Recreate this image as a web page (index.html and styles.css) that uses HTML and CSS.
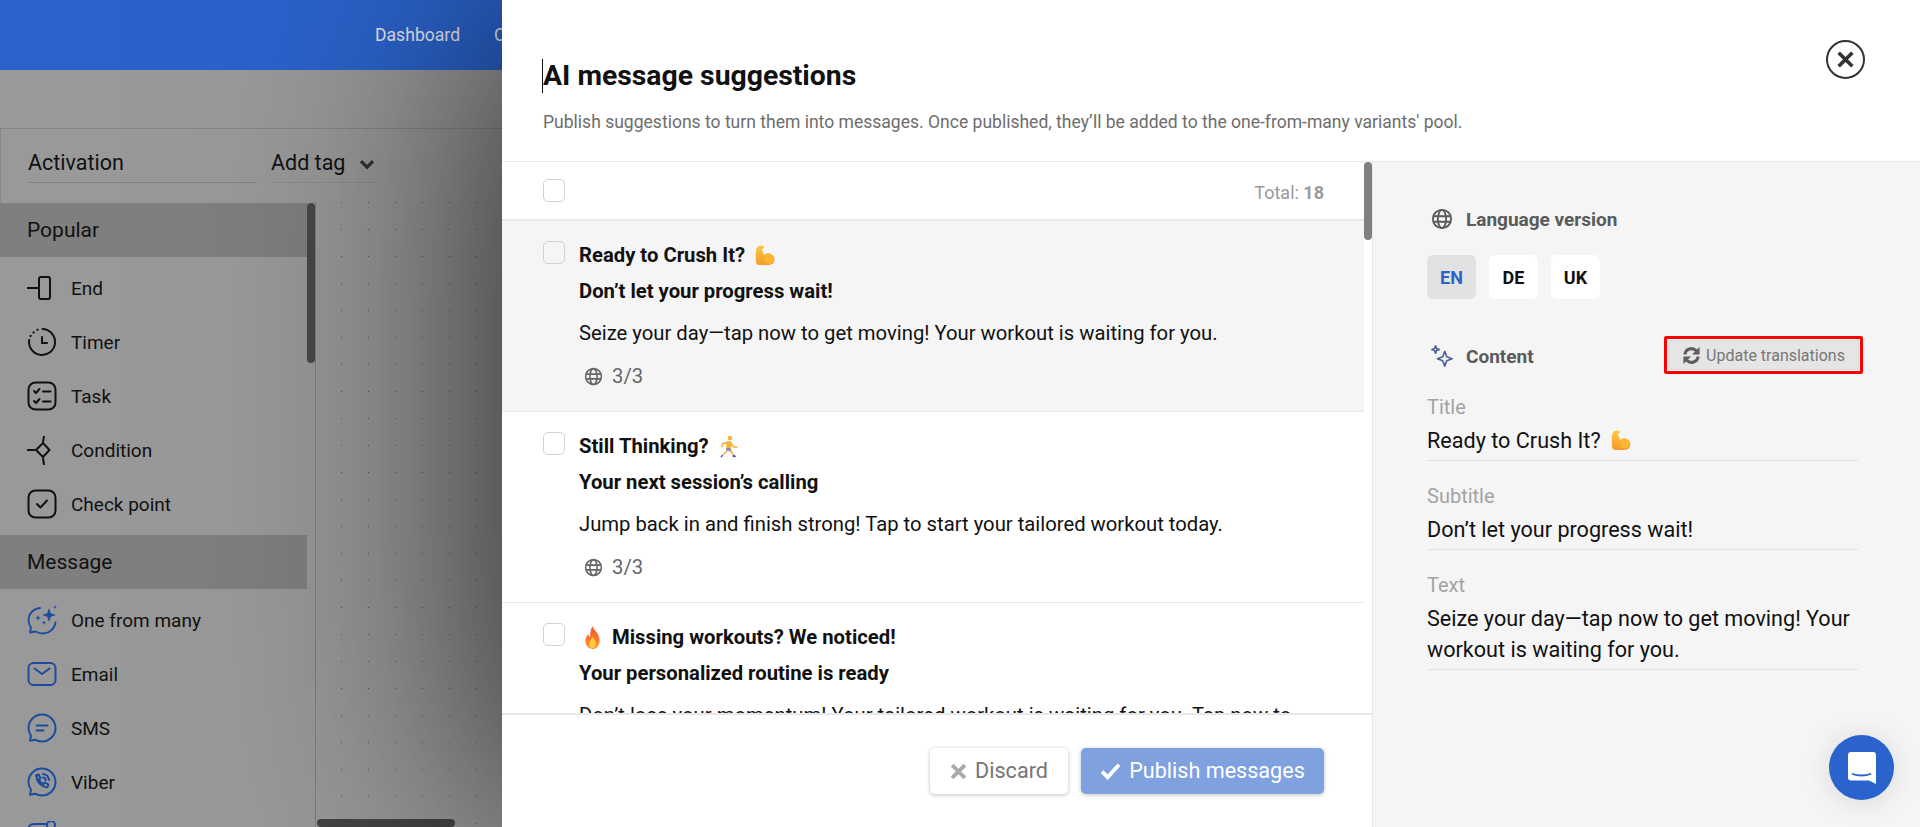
FILE: index.html
```html
<!DOCTYPE html>
<html lang="en">
<head>
<meta charset="utf-8">
<title>AI message suggestions</title>
<link rel="stylesheet" href="styles.css">
</head>
<body>
<svg class="defs" width="0" height="0" aria-hidden="true">
  <defs>
    <linearGradient id="mg" x1="0" y1="0" x2="0" y2="1"><stop offset="0" stop-color="#ffc83d"/><stop offset="1" stop-color="#f59a2c"/></linearGradient>
    <linearGradient id="fg" x1="0" y1="0" x2="0" y2="1"><stop offset="0" stop-color="#f4502a"/><stop offset="1" stop-color="#ff9a2e"/></linearGradient>
    <symbol id="muscle" viewBox="0 0 24 24"><path fill="url(#mg)" d="M5 2.500c2-1.200 5-1.400 6.200-.2 1 1-.2 2.600-2 2.700.6 2.500 1.400 5 2.600 6.600 1.500-1.600 3.600-2.300 5.700-1.800 3.200.8 5 3.400 4.800 6.600-.2 3.400-3 5.600-6.800 5.600H7.500c-2.500 0-4.500-1.300-4.500-4.300 0-5.300-.8-11.500 2-15.200z"/><circle cx="16.500" cy="15.500" r="5" fill="#fdb52f"/></symbol>
    <symbol id="runner" viewBox="0 0 24 24"><circle cx="13.500" cy="3.200" r="2.400" fill="#f7b23b"/><path fill="#f7b23b" d="M10 6.500h4.500l3 5 4 .5-.3 1.500-4.700-.5-1.500-2-1 3H9.500z"/><path fill="#f7b23b" d="M10.500 7L5.500 8 4 12.500l1.500.5 1.300-3.300 3.700-.7z"/><path fill="#8d8aa0" d="M9.500 13.500h4.500l1 2.500-2 1.500-1.500-1.500-2 1z"/><path fill="#f7b23b" d="M13.500 17l1.800-1.200L18 21l-1.500.5zM9.500 16.500l2 .5-5 4.500-1.200-1z"/><path fill="#5b4bc4" d="M5 20.500l1.500 1.200-2 1.800-1-.5zM16.300 21l1.800-.5 1.900 2-.5.5-3 .2z"/></symbol>
    <symbol id="fire" viewBox="0 0 24 24"><path fill="url(#fg)" d="M12 0c.8 4.500 7.500 7.500 7.500 15 0 5-3.400 9-7.500 9s-7.500-3.800-7.500-8.500c0-3.200 1.700-5.200 3-7 .3 1.500 1 2.400 2 3C9.500 7.500 10 3.500 12 0z"/><path fill="#ffc83d" d="M12 11c.6 2.500 3.500 4 3.500 7.500 0 2.500-1.600 4.500-3.500 4.500s-3.500-2-3.500-4.300c0-3 2.800-4.500 3.500-7.700z"/></symbol>
    <symbol id="globe" viewBox="0 0 24 24"><g fill="none" stroke="currentColor" stroke-width="2"><circle cx="12" cy="12" r="10"/><ellipse cx="12" cy="12" rx="4.500" ry="10"/><path d="M2.500 9h19M2.500 15h19"/></g></symbol>
  </defs>
</svg>

<div class="app">
  <header class="topbar">
    <nav class="nav"><span>Dashboard</span><span>Campaigns</span></nav>
  </header>
  <div class="subbar"></div>
  <div class="toolbar">
    <div class="field-name">Activation</div>
    <div class="field-tag">Add tag
      <svg class="chev" viewBox="0 0 14 10"><path d="M1.500 2l5.500 5.500L12.500 2" fill="none" stroke="#333" stroke-width="3"/></svg>
    </div>
  </div>
  <div class="workspace">
    <aside class="side">
      <div class="side-list">
        <div class="band">Popular</div>
        <ul class="items">
          <li><svg class="ic" viewBox="0 0 30 30"><g fill="none" stroke="#111" stroke-width="2"><path d="M0 15h12"/><rect x="12" y="4" width="11" height="22" rx="2"/></g></svg>End</li>
          <li><svg class="ic" viewBox="0 0 30 30"><g fill="none" stroke="#111" stroke-width="2" stroke-linecap="round"><path d="M15.500 2A13 13 0 1 1 2.200 13"/><path d="M3.500 9l.1-.1M6.500 5.500l.1-.1M10.500 2.800l.1-.1" stroke-width="2.200"/><path d="M15 10v6h5"/></g></svg>Timer</li>
          <li><svg class="ic" viewBox="0 0 30 30"><g fill="none" stroke="#111" stroke-width="2" stroke-linecap="round" stroke-linejoin="round"><rect x="1.500" y="1.500" width="27" height="27" rx="7"/><path d="M7 10l2 2 3.500-4M7 20l2 2 3.500-4M16 10.500h7.500M16 20.500h7.500"/></g></svg>Task</li>
          <li><svg class="ic" viewBox="0 0 30 30"><g fill="none" stroke="#111" stroke-width="2"><path d="M16 8l6.500 7-6.500 7-7-7z"/><path d="M0 15h8M17 1l-1 6M16 23l1 7"/></g></svg>Condition</li>
          <li><svg class="ic" viewBox="0 0 30 30"><g fill="none" stroke="#111" stroke-width="2" stroke-linecap="round" stroke-linejoin="round"><rect x="1.500" y="1.500" width="27" height="27" rx="7"/><path d="M10 15l3.500 3.500 6.500-7"/></g></svg>Check point</li>
        </ul>
        <div class="band">Message</div>
        <ul class="items blue">
          <li><svg class="ic" viewBox="0 0 30 30"><g fill="none" stroke="#1d4c9e" stroke-width="1.800" stroke-linecap="round" stroke-linejoin="round"><path d="M13 3C6.500 3.500 1.500 8.500 1.500 15c0 3 1 5.500 2.500 7.500l-1 5 5.500-1c2 1 4.500 2 7 2 7 0 12-4.500 13-11"/></g><path fill="#1d4c9e" d="M22 3l1.800 5.200L29 10l-5.200 1.800L22 17l-1.800-5.200L15 10l5.200-1.800zM11 10l.8 2.200 2.200.8-2.200.8-.8 2.200-.8-2.200-2.200-.8 2.200-.8zM17 15.500l.6 1.500 1.500.6-1.500.6-.6 1.500-.6-1.500-1.500-.6 1.500-.6zM28 0l.5 1.500 1.500.5-1.500.5-.5 1.500-.5-1.500L26 2l1.500-.5z"/></svg>One from many</li>
          <li><svg class="ic" viewBox="0 0 30 30"><g fill="none" stroke="#1d4c9e" stroke-width="2" stroke-linecap="round" stroke-linejoin="round"><rect x="1.500" y="4" width="27" height="22" rx="5"/><path d="M7.500 9.500L15 15l7.500-5.500"/></g></svg>Email</li>
          <li><svg class="ic" viewBox="0 0 30 30"><g fill="none" stroke="#1d4c9e" stroke-width="2" stroke-linecap="round" stroke-linejoin="round"><path d="M15 1.500c7.500 0 13.500 6 13.500 13.500S22.500 28.500 15 28.500c-2.500 0-5-.7-7-1.800l-5 1 1-5C2.500 20.500 1.500 18 1.500 15 1.500 7.500 7.500 1.500 15 1.500z"/><path d="M9.500 12.500h11M9.500 17.500h7"/></g></svg>SMS</li>
          <li><svg class="ic" viewBox="0 0 30 30"><g fill="none" stroke="#1d4c9e" stroke-width="2" stroke-linecap="round" stroke-linejoin="round"><path d="M15 1.500c7.500 0 13.500 6 13.500 13.500S22.500 28.500 15 28.500c-2.500 0-5-.7-7-1.800l-5 1 1-5C2.500 20.500 1.500 18 1.500 15 1.500 7.500 7.500 1.500 15 1.500z"/><path d="M9 8.500l2.500-1 2 3.500-1.500 1.500c.8 2 2.300 3.500 4.500 4.500l1.500-1.500 3.500 2-1 2.500c-5 1-12-5.500-10.500-11.500z"/><path d="M16 7c3 .3 5.500 2.500 6 6M16 10.500c1.500.2 2.500 1.200 2.800 2.700"/></g></svg>Viber</li>
          <li><svg class="ic" viewBox="0 0 30 30"><g fill="none" stroke="#1d4c9e" stroke-width="2" stroke-linecap="round"><path d="M20 3H7C4 3 1.500 5 1.500 8v14"/><circle cx="24" cy="4" r="4"/></g></svg></li>
        </ul>
      </div>
      <div class="side-track"><div class="side-thumb"></div></div>
    </aside>
    <main class="canvas"><div class="h-thumb"></div></main>
  </div>
</div>

<section class="modal">
  <header class="m-head">
    <div>
      <h1 class="m-title">AI message suggestions</h1>
      <p class="m-sub">Publish suggestions to turn them into messages. Once published, they’ll be added to the one-from-many variants' pool.</p>
    </div>
    <button class="close" aria-label="Close"><svg viewBox="0 0 20 20"><path d="M3.500 3.500l13 13M16.500 3.500l-13 13" stroke="#333" stroke-width="3.400" fill="none"/></svg></button>
  </header>
  <div class="m-body">
    <div class="m-left">
      <div class="scroller">
        <div class="list">
          <div class="list-head"><span class="check"></span><span class="total">Total: <b>18</b></span></div>
          <article class="msg active">
            <span class="check"></span>
            <div class="msg-body">
              <div class="msg-title">Ready to Crush It? <svg class="emoji"><use href="#muscle"/></svg></div>
              <div class="msg-sub">Don’t let your progress wait!</div>
              <div class="msg-text">Seize your day—tap now to get moving! Your workout is waiting for you.</div>
              <div class="msg-meta"><svg class="globe-s"><use href="#globe"/></svg>3/3</div>
            </div>
          </article>
          <article class="msg">
            <span class="check"></span>
            <div class="msg-body">
              <div class="msg-title">Still Thinking? <svg class="emoji"><use href="#runner"/></svg></div>
              <div class="msg-sub">Your next session’s calling</div>
              <div class="msg-text">Jump back in and finish strong! Tap to start your tailored workout today.</div>
              <div class="msg-meta"><svg class="globe-s"><use href="#globe"/></svg>3/3</div>
            </div>
          </article>
          <article class="msg">
            <span class="check"></span>
            <div class="msg-body">
              <div class="msg-title"><svg class="emoji lead"><use href="#fire"/></svg> Missing workouts? We noticed!</div>
              <div class="msg-sub">Your personalized routine is ready</div>
              <div class="msg-text">Don’t lose your momentum! Your tailored workout is waiting for you. Tap now to</div>
            </div>
          </article>
        </div>
        <div class="track"><div class="thumb"></div></div>
      </div>
      <footer class="m-foot">
        <button class="btn ghost"><svg class="x" viewBox="0 0 16 16"><path d="M2 2l12 12M14 2L2 14" stroke="#aaa" stroke-width="3.600" fill="none"/></svg>Discard</button>
        <button class="btn primary"><svg class="tick" viewBox="0 0 18 16"><path d="M1.500 8.500l5 5L16.500 2.500" stroke="#fff" stroke-width="3.400" fill="none"/></svg>Publish messages</button>
      </footer>
    </div>
    <aside class="m-right">
      <div class="sec-head first"><svg class="sec-ic"><use href="#globe"/></svg><span>Language version</span></div>
      <div class="langs"><span class="lang on">EN</span><span class="lang">DE</span><span class="lang">UK</span></div>
      <div class="content-row">
        <div class="sec-head"><svg class="sec-ic" viewBox="0 0 24 24"><g fill="none" stroke="#4d6297" stroke-width="1.800" stroke-linejoin="round"><path d="M15 7l2.200 5.800L23 15l-5.800 2.200L15 23l-2.200-5.800L7 15l5.800-2.200z"/><path d="M5 1l1.100 2.900L9 5 6.100 6.100 5 9 3.900 6.100 1 5l2.900-1.100z"/></g></svg><span>Content</span></div>
        <div class="highlight"><button class="update"><svg viewBox="0 0 20 20"><g fill="none" stroke="#5d5d5d" stroke-width="3.200"><path d="M3 9a7 7 0 0 1 12-4"/><path d="M17 11a7 7 0 0 1-12 4"/></g><path fill="#5d5d5d" d="M18.500 1v8h-8zM1.500 19v-8h8z"/></svg>Update translations</button></div>
      </div>
      <div class="field"><label>Title</label><div class="value">Ready to Crush It? <svg class="emoji big"><use href="#muscle"/></svg></div></div>
      <div class="field"><label>Subtitle</label><div class="value">Don’t let your progress wait!</div></div>
      <div class="field"><label>Text</label><div class="value">Seize your day—tap now to get moving! Your workout is waiting for you.</div></div>
    </aside>
  </div>
</section>

<button class="chat" aria-label="Chat"><svg viewBox="0 0 28 32"><path fill="#fff" d="M3 0h22a3 3 0 0 1 3 3v29l-7-3.500H3a3 3 0 0 1-3-3V3a3 3 0 0 1 3-3z"/><path d="M4.500 22c5 2 13 2 18 0" fill="none" stroke="#2b63cc" stroke-width="1.800" stroke-linecap="round"/></svg></button>
</body>
</html>
```

FILE: styles.css
```css
* { box-sizing: border-box; }
html, body { margin: 0; height: 100%; overflow: hidden; }
body { font-family: Roboto, "Liberation Sans", sans-serif; color: #111; background: #999; }
ul { list-style: none; margin: 0; padding: 0; }
h1, p { margin: 0; }
button { font-family: inherit; border: 0; padding: 0; background: none; }
.defs { position: absolute; }

.app { display: flex; flex-direction: column; height: 100vh; }
.topbar { height: 70px; flex: none; background: #2b63cc; display: flex; align-items: center; }
.nav { display: flex; gap: 34px; padding-left: 375px; font-size: 17.600px; color: #e6e9f2; }
.subbar { height: 58px; flex: none; }
.toolbar { height: 74px; flex: none; border: 1px solid #868686; border-bottom: 0; display: flex; padding-left: 27px; gap: 14px; font-size: 21.500px; }
.field-name { width: 229px; height: 54px; border-bottom: 1px solid #808080; display: flex; align-items: flex-end; padding-bottom: 7px; }
.field-tag { width: 105px; height: 54px; border-bottom: 1px solid #8c8c8c; display: flex; align-items: flex-end; padding-bottom: 7px; gap: 14px; }
.chev { width: 16px; height: 11px; margin-bottom: 5px; }
.workspace { flex: 1; display: flex; min-height: 0; }
.side { width: 316px; flex: none; display: flex; border-right: 1px solid #7d7d7d; overflow: hidden; }
.side-list { width: 307px; flex: none; padding-top: 1px; }
.band { height: 54px; background: #7f7f7f; font-size: 21px; padding-left: 27px; display: flex; align-items: center; }
.items { padding: 4px 0; }
.items li { height: 54px; display: flex; align-items: center; gap: 14px; padding-left: 27px; font-size: 19px; }
.ic { width: 30px; height: 30px; flex: none; }
.side-track { width: 8px; flex: none; }
.side-thumb { height: 160px; margin-top: 1px; background: #484848; border-radius: 4px; }
.canvas { flex: 1; position: relative; background-image: radial-gradient(circle at 27px 27px, #555 0.7px, transparent 1px); background-size: 27px 27px; background-position: -1px 1px; }
.h-thumb { position: absolute; left: 1px; bottom: 0; width: 138px; height: 8px; background: #444; border-radius: 4px; }

.modal { position: absolute; top: 0; right: 0; bottom: 0; left: 502px; background: #fff; display: flex; flex-direction: column; box-shadow: 0 0 280px rgba(0, 0, 0, .8); }
.m-head { height: 162px; flex: none; border-bottom: 1px solid #e8e8e8; padding: 59px 55px 0 41px; display: flex; justify-content: space-between; align-items: flex-start; }
.m-title { font-size: 28.350px; font-weight: 700; line-height: 34px; color: #111; border-left: 1px solid #111; margin-left: -1px; }
.m-sub { font-size: 17.550px; line-height: 24px; color: #6d6d6d; margin-top: 17px; }
.close { width: 39px; height: 39px; margin-top: -19px; border: 2px solid #333; border-radius: 50%; display: flex; align-items: center; justify-content: center; }
.close svg { width: 21px; height: 21px; }
.m-body { flex: 1; display: flex; min-height: 0; }
.m-left { width: 870px; flex: none; display: flex; flex-direction: column; }
.scroller { height: 551px; flex: none; display: flex; overflow: hidden; }
.list { flex: 1; min-width: 0; }
.track { width: 8px; flex: none; }
.thumb { height: 78px; background: #808080; border-radius: 4px; }
.list-head { height: 59px; border-bottom: 2px solid #e8e8e8; padding: 17px 40px 0 41px; display: flex; justify-content: space-between; }
.check { display: block; width: 22px; height: 23px; flex: none; border: 1px solid #d2d2d2; border-radius: 5px; background: #fff; }
.msg .check { background: transparent; }
.total { font-size: 18px; color: #9a9a9a; line-height: 24px; padding-top: 2px; }
.total b { font-weight: 700; }
.msg { height: 191px; display: flex; gap: 14px; padding: 20px 0 0 41px; border-bottom: 1px solid #e8e8e8; }
.msg.active { background: #f5f5f5; }
.msg-title, .msg-sub { font-size: 20.250px; font-weight: 700; line-height: 28px; color: #111; display: flex; align-items: center; gap: 8px; }
.msg-sub { margin-top: 8px; }
.msg-text { font-size: 20.250px; line-height: 28px; margin-top: 14px; color: #111; white-space: nowrap; }
.msg-meta { display: flex; align-items: center; gap: 9px; margin-top: 15px; padding-left: 5px; line-height: 28px; font-size: 20.250px; color: #666; }
.globe-s { width: 19px; height: 19px; color: #666; }
.emoji { width: 23px; height: 23px; flex: none; }
.emoji.lead { margin-left: 2px; }
.emoji.big { width: 23px; height: 23px; vertical-align: -4px; margin-left: 3px; }
.m-foot { flex: 1; border-top: 2px solid #e8e8e8; padding: 33px 48px 0 0; display: flex; justify-content: flex-end; align-items: flex-start; gap: 13px; }
.btn { height: 46px; border-radius: 5px; display: flex; align-items: center; justify-content: center; gap: 8px; font-size: 21.600px; line-height: 44px; box-shadow: 0 1px 4px rgba(0, 0, 0, .25); }
.btn .x { width: 17px; height: 17px; }
.btn .tick { width: 21px; height: 18px; }
.ghost { width: 138px; background: #fff; color: #757575; }
.primary { width: 243px; background: #80a1e0; color: #fff; }

.m-right { flex: 1; background: #f5f5f5; border-left: 1px solid #e8e8e8; padding: 45px 0 0 54px; }
.sec-head { display: flex; align-items: center; gap: 13px; height: 24px; padding-left: 4px; font-size: 19px; font-weight: 700; color: #5a5a5a; }
.content-row .sec-head { margin-top: 2px; }
.sec-ic { width: 22px; height: 22px; color: #5a5a5a; flex: none; }
.langs { display: flex; gap: 13px; margin-top: 24px; }
.lang { width: 49px; height: 44px; border-radius: 6px; background: #fff; display: flex; align-items: center; justify-content: center; font-size: 18px; font-weight: 700; color: #111; }
.lang.on { background: #e2e2e2; color: #2b63cc; }
.content-row { width: 436px; display: flex; justify-content: space-between; align-items: center; height: 38px; margin-top: 37px; }
.highlight { width: 199px; height: 38px; border: 3px solid #f00; border-radius: 2px; padding: 1px; }
.update { width: 100%; height: 100%; background: #e5e5e5; border-radius: 2px; display: flex; align-items: center; justify-content: center; gap: 5px; font-size: 16px; color: #777; box-shadow: inset 0 0 0 1px #dcdcdc; }
.update svg { width: 19px; height: 19px; }
.field { width: 431px; border-bottom: 1px solid #e2e2e2; padding-bottom: 4px; margin-top: 23px; }
.content-row + .field { margin-top: 21px; }
.field label { display: block; font-size: 20px; line-height: 24px; color: #a3a3a3; }
.value { font-size: 21.600px; line-height: 31px; margin-top: 6px; color: #111; }

.chat { position: absolute; left: 1829px; top: 735px; width: 65px; height: 65px; border-radius: 50%; background: #2b63cc; box-shadow: 0 2px 30px rgba(0, 0, 0, .12); display: flex; align-items: center; justify-content: center; }
.chat svg { width: 28px; height: 32px; }
```
